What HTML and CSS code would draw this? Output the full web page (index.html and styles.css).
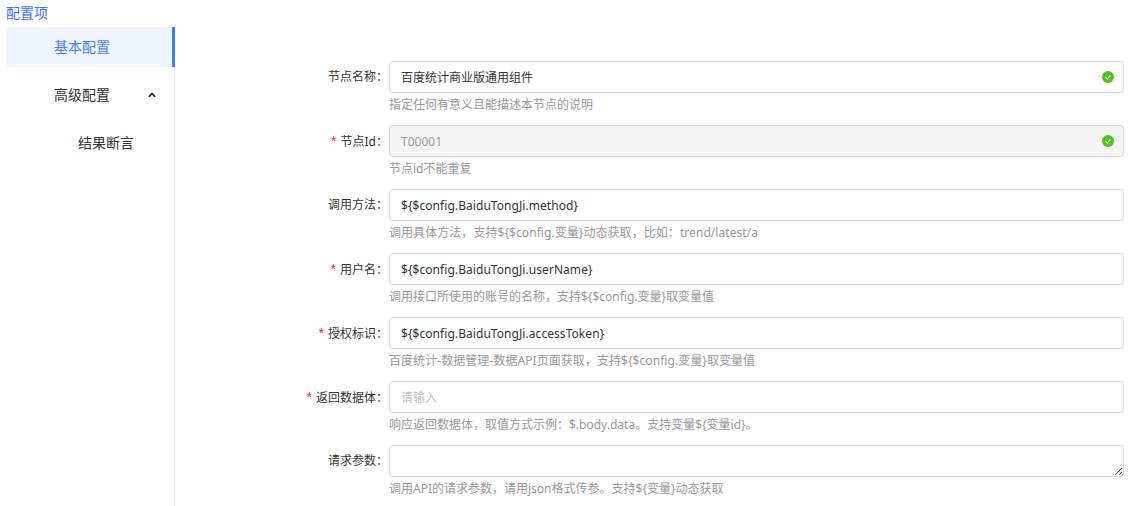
FILE: index.html
```html
<!DOCTYPE html>
<html lang="zh-CN">
<head>
<meta charset="utf-8">
<title>配置项</title>
<link rel="stylesheet" href="styles.css">
</head>
<body>
<div class="page">
  <div class="title">配置项</div>
  <div class="main">
    <nav class="menu">
      <div class="item active">基本配置</div>
      <div class="item parent">高级配置
        <svg class="chev" width="8" height="6" viewBox="0 0 8 6"><path d="M0.8 4.8 4 1.6l3.2 3.2" fill="none" stroke="#333" stroke-width="1.8"/></svg>
      </div>
      <div class="item sub">结果断言</div>
    </nav>
    <form class="form">
      <div class="row">
        <label class="label">节点名称：</label>
        <div class="control">
          <div class="field"><input class="input" value="百度统计商业版通用组件">
            <svg class="ok" width="12" height="12" viewBox="0 0 12 12"><circle cx="6" cy="6" r="6" fill="#52c41a"/><path d="M3.6 6.1 5.3 7.8 8.4 4.6" fill="none" stroke="#fff" stroke-width="1.2"/></svg>
          </div>
          <div class="help">指定任何有意义且能描述本节点的说明</div>
        </div>
      </div>
      <div class="row">
        <label class="label"><span class="req">*</span>节点Id：</label>
        <div class="control">
          <div class="field"><input class="input disabled" value="T00001" disabled>
            <svg class="ok" width="12" height="12" viewBox="0 0 12 12"><circle cx="6" cy="6" r="6" fill="#52c41a"/><path d="M3.6 6.1 5.3 7.8 8.4 4.6" fill="none" stroke="#fff" stroke-width="1.2"/></svg>
          </div>
          <div class="help">节点id不能重复</div>
        </div>
      </div>
      <div class="row">
        <label class="label">调用方法：</label>
        <div class="control">
          <div class="field"><input class="input expr" value="${$config.BaiduTongJi.method}"></div>
          <div class="help wide">调用具体方法，支持${$config.变量}动态获取，比如：trend/latest/a</div>
        </div>
      </div>
      <div class="row">
        <label class="label"><span class="req">*</span>用户名：</label>
        <div class="control">
          <div class="field"><input class="input expr" value="${$config.BaiduTongJi.userName}"></div>
          <div class="help">调用接口所使用的账号的名称，支持${$config.变量}取变量值</div>
        </div>
      </div>
      <div class="row">
        <label class="label"><span class="req">*</span>授权标识：</label>
        <div class="control">
          <div class="field"><input class="input expr" value="${$config.BaiduTongJi.accessToken}"></div>
          <div class="help wide">百度统计-数据管理-数据API页面获取，支持${$config.变量}取变量值</div>
        </div>
      </div>
      <div class="row">
        <label class="label"><span class="req">*</span>返回数据体：</label>
        <div class="control">
          <div class="field"><input class="input" placeholder="请输入"></div>
          <div class="help">响应返回数据体，取值方式示例：$.body.data。支持变量${变量id}。</div>
        </div>
      </div>
      <div class="row">
        <label class="label">请求参数：</label>
        <div class="control">
          <div class="field"><textarea class="input area"></textarea></div>
          <div class="help">调用API的请求参数，请用json格式传参。支持${变量}动态获取</div>
        </div>
      </div>
    </form>
  </div>
</div>
</body>
</html>
```
FILE: styles.css
```css
* { box-sizing: border-box; }
html, body { margin: 0; height: 100%; overflow: hidden; background: #fff; }
body {
  font-family: "Noto Sans", "Noto Sans CJK SC", sans-serif;
  font-size: 12px;
  color: #333;
}
.page { padding: 5px 0 0 6px; }
.title { font-size: 14px; line-height: 16px; color: #3d6fff; height: 18px; }
.main { display: flex; }
.menu {
  width: 169px;
  height: 490px;
  flex: none;
  border-right: 1px solid #e8e8e8;
  padding-top: 4px;
  font-size: 14px;
  color: #333;
}
.item { height: 40px; line-height: 40px; margin-bottom: 8px; padding-left: 48px; position: relative; width: 169px; }
.item.active { background: #f0f6ff; color: #4a7dff; border-right: 3px solid #3d7eff; }
.item.sub { padding-left: 72px; }
.chev { position: absolute; left: 142px; top: 17px; }
.form { flex: none; width: 949px; padding: 38px 0 0 0; }
.row { display: flex; height: 64px; }
.label {
  width: 214px;
  flex: none;
  padding-right: 1px;
  text-align: right;
  line-height: 32px;
  height: 32px;
  color: #333;
}
.req { color: #f5222d; font-family: "Liberation Sans", sans-serif; font-size: 14px; margin-right: 4px; }
.control { width: 735px; flex: none; }
.field { position: relative; height: 32px; }
.input {
  display: block;
  width: 100%;
  height: 32px;
  border: 1px solid #d9d9d9;
  border-radius: 4px;
  padding: 0 11px;
  font: inherit;
  color: #333;
  background: #fff;
  outline: none;
}
.input.expr { letter-spacing: 0.06px; }
.input::placeholder { color: #bfbfbf; }
.input.disabled { background: #f5f5f5; color: #999; }
.area { resize: vertical; padding: 4px 11px; }
.ok { position: absolute; right: 10px; top: 10px; }
.help { line-height: 20px; margin-top: 2px; color: #999; }
.help.wide { letter-spacing: 0.06px; }
```
